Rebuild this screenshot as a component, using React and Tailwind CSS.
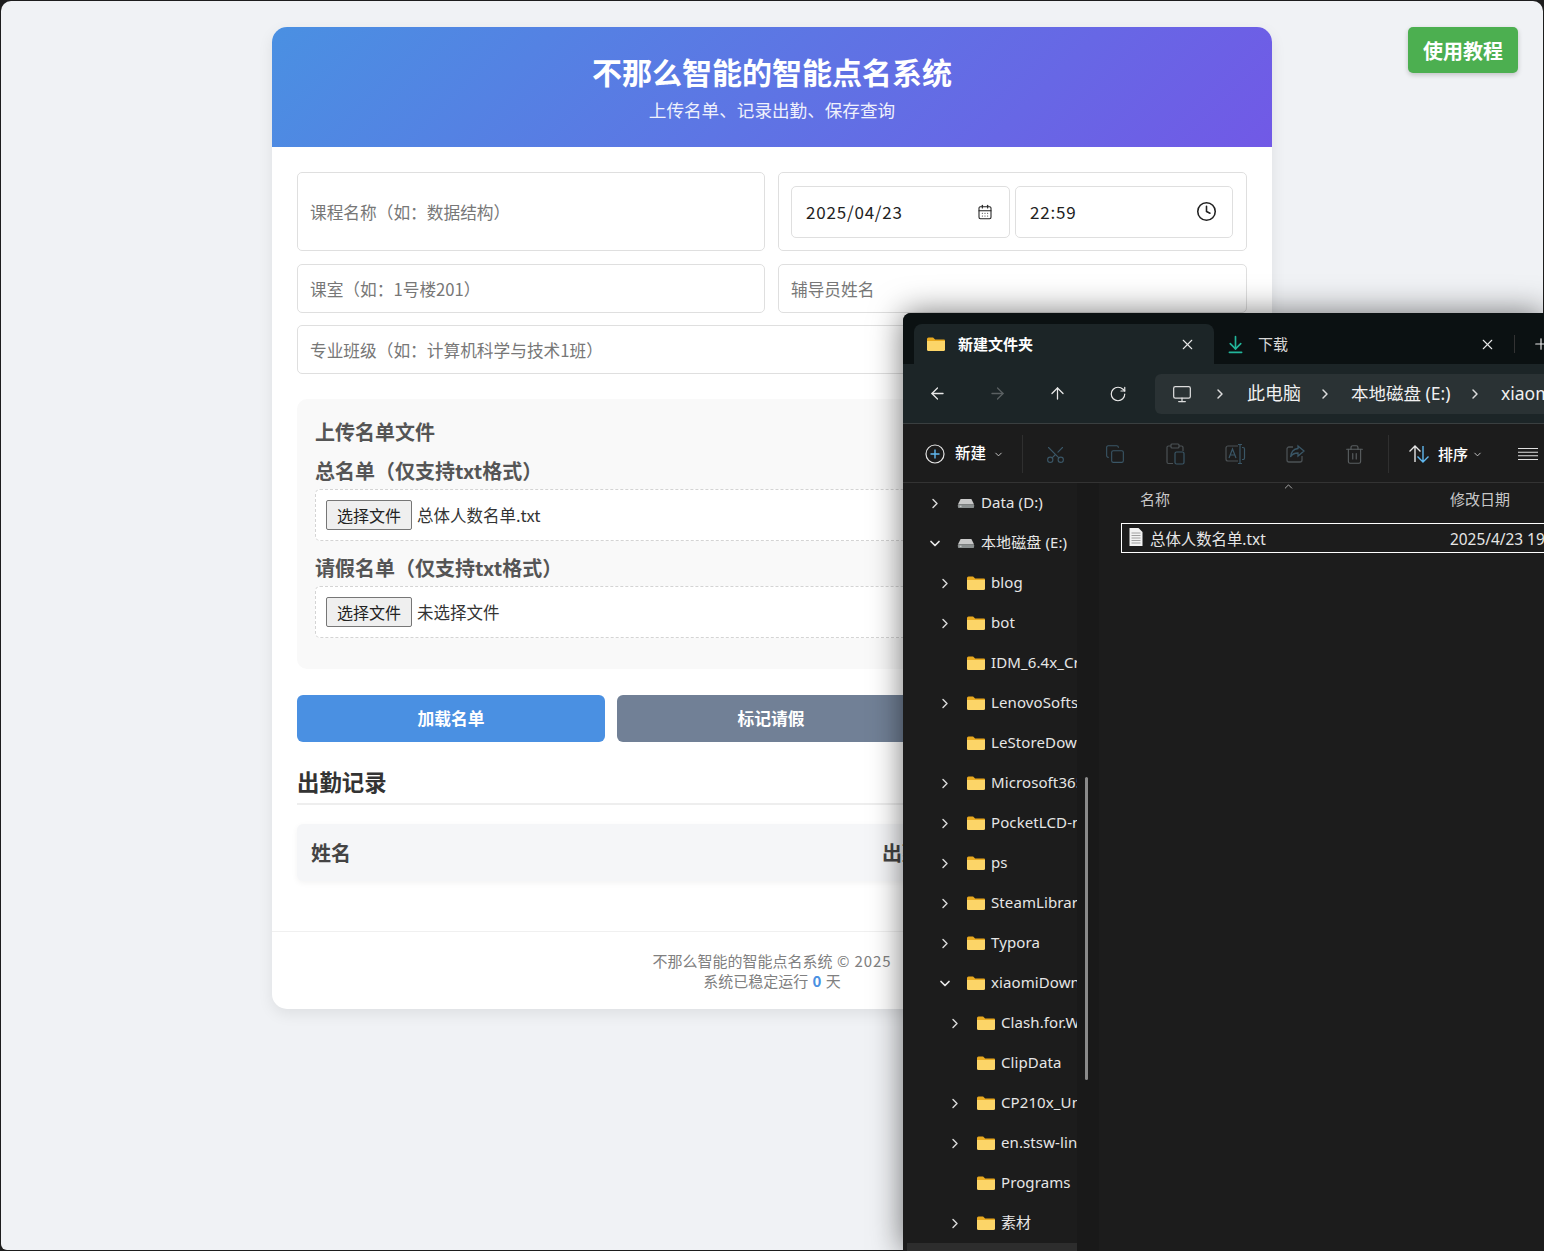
import React from 'react';
import { ArrowLeft, ArrowRight, ArrowUp, RotateCw, Monitor, ChevronRight, ChevronDown, ChevronUp, X, Plus, Scissors, Copy, Trash2, Clock, CalendarDays, ArrowDownToLine } from 'lucide-react';

const Folder = ({ className = '' }) => (
  <svg viewBox="0 0 20 16" className={className}>
    <path d="M1 3a1.5 1.5 0 0 1 1.5-1.5h4.6l2 2H18a1 1 0 0 1 1 1V5H1z" fill="#e9a91f" />
    <path d="M1 5h18v8.5a1.5 1.5 0 0 1-1.5 1.5h-15A1.5 1.5 0 0 1 1 13.5z" fill="#fcd568" />
  </svg>
);

const Drive = () => (
  <svg viewBox="0 0 20 12" className="w-[18px] h-[11px] shrink-0">
    <path d="M4 1h12l3 6H1z" fill="#c9c9c9" />
    <rect x="1" y="7" width="18" height="4" rx="1" fill="#8a8f8f" />
    <rect x="3" y="8.5" width="2" height="1" fill="#e8e8e8" />
  </svg>
);

const tree = [
  [0, 'r', 'drive', 'Data (D:)'],
  [0, 'd', 'drive', '本地磁盘 (E:)'],
  [1, 'r', 'f', 'blog'],
  [1, 'r', 'f', 'bot'],
  [1, '', 'f', 'IDM_6.4x_Crack'],
  [1, 'r', 'f', 'LenovoSoftstore'],
  [1, '', 'f', 'LeStoreDownload'],
  [1, 'r', 'f', 'Microsoft365'],
  [1, 'r', 'f', 'PocketLCD-main'],
  [1, 'r', 'f', 'ps'],
  [1, 'r', 'f', 'SteamLibrary'],
  [1, 'r', 'f', 'Typora'],
  [1, 'd', 'f', 'xiaomiDownload'],
  [2, 'r', 'f', 'Clash.for.Windows'],
  [2, '', 'f', 'ClipData'],
  [2, 'r', 'f', 'CP210x_Universal'],
  [2, 'r', 'f', 'en.stsw-link007'],
  [2, '', 'f', 'Programs'],
  [2, 'r', 'f', '素材'],
];

const indents = { 0: 'pl-[24px]', 1: 'pl-[34px]', 2: 'pl-[44px]' };

function TreeRow({ level, chev, icon, label }) {
  return (
    <div className={`h-[40px] flex items-center shrink-0 ${indents[level]}`}>
      <span className="w-[16px] flex justify-center shrink-0">
        {chev === 'r' && <ChevronRight size={17} strokeWidth={2.2} className="text-[#d8d8d8]" />}
        {chev === 'd' && <ChevronDown size={17} strokeWidth={2.6} className="text-[#e8e8e8]" />}
      </span>
      <span className={`${icon === 'drive' ? 'w-[14px]' : 'w-[13px]'} shrink-0`} />
      {icon === 'drive' ? <Drive /> : <Folder className="w-[20px] h-[16px] shrink-0" />}
      <span className={`${icon === 'drive' ? 'ml-[6px]' : 'ml-[5px]'} text-[15px] leading-[20px] mt-[-2px] tracking-[0.1px] text-[#e6e6e6] whitespace-nowrap`}>{label}</span>
    </div>
  );
}

function FileField({ name }) {
  return (
    <div className="h-[52px] border border-dashed border-[#d4d4d4] rounded-[5px] bg-white flex items-center pl-[10px]">
      <span className="h-[30px] w-[86px] flex items-center justify-center border border-[#767676] rounded-[2px] bg-[#efefef] text-[16px] text-[#222]">选择文件</span>
      <span className="ml-[5px] text-[16.5px] text-[#333]">{name}</span>
    </div>
  );
}

const inputCls = 'border border-[#dfdfdf] rounded-[5px] bg-white flex items-center px-[12px] pt-[2px] text-[16.7px] text-[#777]';
const dim = '#3a5666';

export default function App() {
  return (
    <div className="h-[1251px] w-[1544px] bg-[#1d1d1d] overflow-hidden relative font-['Noto_Sans_CJK_SC',sans-serif]">
      <div className="absolute inset-x-[1px] top-[1px] bottom-[1px] bg-[#f0f2f5] rounded-t-[10px] rounded-b-[6px]" />
      <div className="relative pt-[27px] pl-[272px]">
        <div className="w-[1000px] h-[982px] bg-white rounded-[15px] overflow-hidden shadow-[0_5px_15px_rgba(0,0,0,0.08)] flex flex-col">
          <div className="h-[120px] bg-[linear-gradient(135deg,#4a90e2,#7159e6)] flex flex-col items-center text-white pt-[23px]">
            <h1 className="text-[30px] leading-[43px] font-bold">不那么智能的智能点名系统</h1>
            <p className="text-[17.6px] leading-[34px] opacity-90">上传名单、记录出勤、保存查询</p>
          </div>
          <div className="flex-1 px-[25px] pt-[25px]">
            <div className="grid grid-cols-[468px_469px] gap-x-[13px] gap-y-[13px]">
              <div className={`h-[79px] ${inputCls}`}>课程名称（如：数据结构）</div>
              <div className="h-[79px] border border-[#dfdfdf] rounded-[5px] flex items-center gap-[5px] px-[12px]">
                <div className="h-[52px] w-[219px] shrink-0 border border-[#dfdfdf] rounded-[5px] flex items-center justify-between pl-[14px] pr-[16px] text-[17px] tracking-[0.8px] text-[#222]">
                  2025/04/23
                  <CalendarDays size={16} strokeWidth={1.6} className="text-[#222]" />
                </div>
                <div className="h-[52px] w-[218px] shrink-0 border border-[#dfdfdf] rounded-[5px] flex items-center justify-between pl-[14px] pr-[15px] text-[17px] tracking-[0.8px] text-[#222]">
                  22:59
                  <Clock size={21} strokeWidth={1.8} className="text-[#222]" />
                </div>
              </div>
              <div className={`h-[49px] ${inputCls}`}>课室（如：1号楼201）</div>
              <div className={`h-[49px] ${inputCls}`}>辅导员姓名</div>
            </div>
            <div className={`h-[49px] mt-[12px] ${inputCls}`}>专业班级（如：计算机科学与技术1班）</div>

            <div className="h-[270px] mt-[25px] bg-[#f9f9f9] rounded-[10px] px-[18px] pt-[16px]">
              <h2 className="text-[20px] leading-[34px] font-bold text-[#555]">上传名单文件</h2>
              <div className="text-[20px] leading-[30px] mt-[7px] font-bold text-[#555]">总名单（仅支持txt格式）</div>
              <div className="mt-[3px]"><FileField name="总体人数名单.txt" /></div>
              <div className="text-[20px] leading-[30px] mt-[12px] font-bold text-[#555]">请假名单（仅支持txt格式）</div>
              <div className="mt-[3px]"><FileField name="未选择文件" /></div>
            </div>

            <div className="grid grid-cols-[308px_308px_1fr] gap-[12px] mt-[26px]">
              <div className="h-[47px] bg-[#4a90e2] rounded-[6px] flex items-center justify-center text-white text-[16.8px] font-bold">加载名单</div>
              <div className="h-[47px] bg-[#718096] rounded-[6px] flex items-center justify-center text-white text-[16.8px] font-bold">标记请假</div>
              <div className="h-[47px] bg-[#4caf50] rounded-[6px] flex items-center justify-center text-white text-[16.8px] font-bold">保存记录</div>
            </div>

            <h3 className="mt-[24px] h-[39px] text-[22.4px] leading-[30px] font-bold text-[#333] border-b-2 border-[#eeeeee]">出勤记录</h3>

            <div className="mt-[19px] h-[57px] bg-[#f5f6f8] rounded-[6px] shadow-[0_2px_6px_rgba(0,0,0,0.05)] grid grid-cols-[571px_1fr] items-center pl-[14px] text-[20px] font-bold text-[#444]">
              <span>姓名</span>
              <span>出勤状态</span>
            </div>
          </div>
          <div className="h-[78px] border-t border-[#f0f0f0] flex flex-col items-center pt-[19px] text-[15px] leading-[20px] text-[#808080]">
            <p>不那么智能的智能点名系统 <span className="tracking-[0.9px] ml-[1px]">© 2025</span></p>
            <p>系统已稳定运行 <span className="font-bold text-[#4a90e2] mx-[1px]">0</span> 天</p>
          </div>
        </div>
      </div>

      <button className="absolute left-[1408px] top-[27px] w-[110px] h-[46px] pt-[1px] bg-[#4caf50] rounded-[5px] shadow-[0_2px_5px_rgba(0,0,0,0.2)] text-white text-[20px] font-bold flex items-center justify-center">使用教程</button>

      <div className="absolute left-[903px] top-[313px] w-[641px] h-[938px] overflow-hidden rounded-tl-[8px] bg-[#1c1c1c] shadow-[0_0_32px_rgba(0,0,0,0.55)] flex flex-col font-['Noto_Sans','Noto_Sans_CJK_SC',sans-serif] text-white">
        <div className="h-[51px] bg-[#0b1112] flex items-end pl-[11px] shrink-0">
          <div className="w-[300px] shrink-0 h-[40px] bg-[#1c2527] rounded-t-[8px] flex items-center pl-[12px] pr-[18px]">
            <Folder className="w-[20px] h-[16px] shrink-0" />
            <span className="ml-[12px] text-[15px] font-bold flex-1">新建文件夹</span>
            <X size={17} strokeWidth={1.5} className="text-[#e8e8e8]" />
          </div>
          <div className="w-[300px] shrink-0 h-[40px] flex items-center pl-[11px] pr-[18px]">
            <ArrowDownToLine size={21} strokeWidth={1.9} className="text-[#22b59a] shrink-0" />
            <span className="ml-[12px] text-[15px] text-[#d8d8d8] flex-1">下载</span>
            <X size={17} strokeWidth={1.5} className="text-[#e8e8e8]" />
          </div>
          <div className="h-[40px] flex items-center shrink-0">
            <span className="w-px h-[18px] bg-[#333]" />
            <Plus size={18} strokeWidth={1.6} className="ml-[17px] shrink-0 text-[#e8e8e8]" />
          </div>
        </div>
        <div className="h-[60px] bg-[#1c2527] border-b border-[#3a3f40] flex items-center shrink-0">
          <ArrowLeft size={19} strokeWidth={1.6} className="ml-[25px] text-[#e8e8e8]" />
          <ArrowRight size={19} strokeWidth={1.6} className="ml-[41px] text-[#5a6062]" />
          <ArrowUp size={19} strokeWidth={1.6} className="ml-[41px] text-[#e8e8e8]" />
          <RotateCw size={18} strokeWidth={1.6} className="ml-[42px] text-[#e8e8e8]" />
          <div className="ml-[28px] flex-1 h-[40px] bg-[#2a3234] rounded-l-[6px] flex items-center pl-[17px] whitespace-nowrap text-[17.5px] text-[#f0f0f0] overflow-hidden">
            <Monitor size={20} strokeWidth={1.5} className="text-[#dcdcdc] shrink-0" />
            <ChevronRight size={16} strokeWidth={2.2} className="ml-[20px] shrink-0 text-[#dcdcdc]" />
            <span className="ml-[19px] w-[70px] shrink-0 text-[18px]">此电脑</span>
            <ChevronRight size={16} strokeWidth={2.2} className="shrink-0 text-[#dcdcdc]" />
            <span className="ml-[18px] w-[116px] shrink-0">本地磁盘 (E:)</span>
            <ChevronRight size={16} strokeWidth={2.2} className="shrink-0 text-[#dcdcdc]" />
            <span className="ml-[18px]">xiaomiDownload</span>
          </div>
        </div>
        <div className="h-[59px] border-b border-[#333] flex items-center shrink-0 bg-[#1c1c1c] pt-[2px]">
          <svg viewBox="0 0 20 20" className="ml-[22px] w-[20px] h-[20px] shrink-0" fill="none">
            <circle cx="10" cy="10" r="9" stroke="#e4e4e4" strokeWidth="1.2" />
            <path d="M10 5.5v9M5.5 10h9" stroke="#60b8f0" strokeWidth="1.4" />
          </svg>
          <span className="ml-[10px] text-[15.5px] font-medium w-[36px]">新建</span>
          <ChevronDown size={11} className="ml-[2px] text-[#cfcfcf] shrink-0" />
          <span className="ml-[18px] w-px h-[38px] bg-[#2f2f2f] shrink-0" />
          <Scissors size={21} strokeWidth={1.3} className="ml-[22px] shrink-0 -rotate-90" color={dim} />
          <Copy size={20} strokeWidth={1.3} className="ml-[39px] shrink-0" color={dim} />
          <svg viewBox="0 0 20 22" className="ml-[40px] w-[20px] h-[22px] shrink-0" fill="none" stroke="#4b5154" strokeWidth="1.2">
            <path d="M6 3H3.5A1.5 1.5 0 0 0 2 4.500V19a1.500 1.500 0 0 0 1.500 1.500H8M14 3h2.500A1.500 1.500 0 0 1 18 4.500V8" />
            <rect x="6" y="1" width="8" height="4" rx="1" />
            <rect x="10" y="9" width="9" height="12" rx="1.500" stroke={dim} />
          </svg>
          <svg viewBox="0 0 22 20" className="ml-[39px] w-[22px] h-[20px] shrink-0" fill="none" strokeWidth="1.2">
            <path d="M14 2H4a2 2 0 0 0-2 2v11a2 2 0 0 0 2 2h10" stroke="#4b5154" />
            <path d="M14 0.500h4M16 0.500v19M14 19.500h4M18 3.500h1a1.500 1.500 0 0 1 1.500 1.500v9a1.500 1.500 0 0 1-1.500 1.500h-1" stroke={dim} />
            <path d="M5 14l3.500-9 3.500 9M6.300 11h4.400" stroke={dim} />
          </svg>
          <svg viewBox="0 0 20 20" className="ml-[39px] w-[20px] h-[20px] shrink-0" fill="none" strokeWidth="1.3">
            <path d="M8 3H4a2 2 0 0 0-2 2v11a2 2 0 0 0 2 2h11a2 2 0 0 0 2-2v-4" stroke="#4b5154" />
            <path d="M13 2l6 5-6 5V9c-3.500 0-6 1-7.500 4 .5-5 3-8 7.500-8.500z" stroke={dim} />
          </svg>
          <Trash2 size={21} strokeWidth={1.3} className="ml-[39px] shrink-0 text-[#5a5f61]" />
          <span className="ml-[23px] w-px h-[38px] bg-[#2f2f2f] shrink-0" />
          <svg viewBox="0 0 22 20" className="ml-[19px] w-[22px] h-[20px] shrink-0" fill="none" strokeWidth="1.4">
            <path d="M7 18V2M1.500 7.500L7 2l5.500 5.500" stroke="#e4e4e4" />
            <path d="M15 2v16M9.500 12.500L15 18l5.500-5.500" stroke="#60b8f0" />
          </svg>
          <span className="ml-[8px] text-[15px] font-medium w-[32px]">排序</span>
          <ChevronDown size={11} className="ml-[2px] text-[#cfcfcf] shrink-0" />
          <svg viewBox="0 0 20 14" className="ml-[35px] w-[20px] h-[14px] shrink-0" stroke="#e0e0e0" strokeWidth="1.1">
            <path d="M0 1.500h20M0 5.200h20M0 8.800h20M0 12.500h20" />
          </svg>
        </div>
        <div className="flex-1 flex min-h-0 relative">
          <div className="w-[174px] shrink-0 overflow-hidden flex flex-col relative">
            {tree.map(([l, c, i, t]) => <TreeRow key={t} level={l} chev={c} icon={i} label={t} />)}
            <div className="ml-[4px] h-[40px] bg-[#2d2d2d] shrink-0" />
          </div>
          <div className="w-[22px] shrink-0 bg-[#191919] relative">
            <div className="absolute left-[8px] top-[294px] w-[3px] h-[303px] rounded-full bg-[#8a8a8a]" />
          </div>
          <div className="flex-1 bg-[#1c1c1c] relative overflow-hidden">
            <ChevronUp size={13} strokeWidth={1.6} className="absolute left-[183px] top-[-3px] text-[#bdbdbd]" />
            <div className="h-[40px] flex items-center text-[15px] leading-[20px] pb-[8px] text-[#c8c8c8] pl-[41px] whitespace-nowrap">
              <span className="w-[310px]">名称</span>
              <span>修改日期</span>
            </div>
            <div className="ml-[22px] w-[600px] h-[30px] border border-white flex items-center pl-[6px] pt-[3px] text-[15.400px] text-[#e6e6e6] whitespace-nowrap">
              <svg viewBox="0 0 14 18" className="w-[15px] h-[18px] shrink-0 mt-[-5px]">
                <path d="M1 0h9l4 4v14H1z" fill="#f2f2f2" />
                <path d="M3 5h9M3 7.500h9M3 10h9M3 12.500h9M3 15h9" stroke="#8a8a8a" strokeWidth="0.8" />
              </svg>
              <span className="ml-[7px] w-[300px] shrink-0">总体人数名单.txt</span>
              <span>2025/4/23 19:30</span>
            </div>
          </div>
        </div>
      </div>
    </div>
  );
}
